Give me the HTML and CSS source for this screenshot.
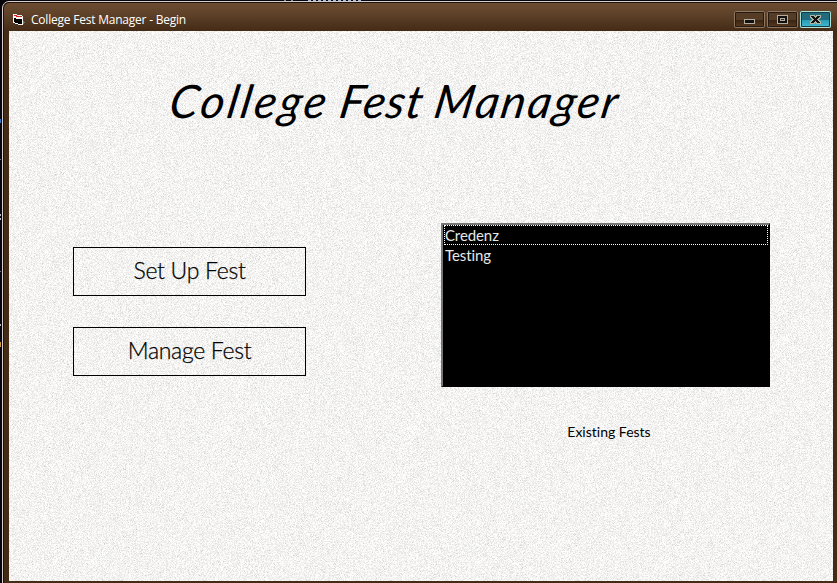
FILE: index.html
```html
<!DOCTYPE html>
<html lang="en">
<head>
<meta charset="utf-8">
<title>College Fest Manager - Begin</title>
<link rel="stylesheet" href="styles.css">
</head>
<body>
<svg class="backdrop" width="837" height="583" shape-rendering="crispEdges">
  <path d="M308 .5h55" stroke="#a8b8d0" stroke-dasharray="3 2"/>
  <path d="M284 .5h2M291 .5h2" stroke="#888"/>
  <path d="M0 119h1v4H0z" fill="#2f78cc"/>
  <path d="M0 159h1v1H0zM0 271h1v1H0z" fill="#777"/>
  <path d="M0 214h1v2H0zM0 218h1v2H0zM0 324h1v2H0z" fill="#bbb"/>
  <path d="M0 342h1v5H0z" fill="#d49a35"/>
</svg>
<div class="window">
  <header class="titlebar">
    <svg class="app-icon" width="13" height="12" viewBox="0 0 13 12" shape-rendering="crispEdges">
      <path d="M0 0h4v1h5v1h1v6h1v1h-1v2H5v-1H2V9H0z" fill="#f4f4f4"/>
      <path d="M1 1h3v1h5v1H5V3H3V2H1z" fill="#e02020"/>
      <path d="M1 4h2v1h6v5H5V9H2V8H1z" fill="#000"/>
      <path d="M10 7h1v1h1v1h-1v1h-1z" fill="#777"/>
    </svg>
    <span class="caption">College Fest Manager - Begin</span>
    <div class="controls">
      <svg class="ctl" viewBox="0 0 31 17" shape-rendering="crispEdges"><path d="M10 8h11v5H10z" fill="#b5ab9d"/><path d="M11 9h9v3h-9z" fill="#111"/></svg>
      <svg class="ctl" viewBox="0 0 31 17" shape-rendering="crispEdges"><path d="M10 4h11v9H10z" fill="#b5ab9d"/><path d="M11 5h9v7h-9z" fill="#111"/><path d="M13 7h5v3h-5z" fill="#b5ab9d"/><path d="M14 8h3v1h-3z" fill="#3c2a18"/></svg>
      <svg class="ctl close" viewBox="0 0 31 17" shape-rendering="crispEdges"><path d="M10 4h5v1h1v-1h5v3h-1v1h-1v1h1v1h1v3h-5v-1h-1v1h-5v-3h1v-1h1v-1h-1v-1h-1z" fill="#a9b5a9"/><path d="M11 5h3v1h1v1h1v-1h1v-1h3v1h-1v1h-1v1h-1v1h1v1h1v1h1v1h-3v-1h-1v-1h-1v1h-1v1h-3v-1h1v-1h1v-1h1v-1h-1v-1h-1v-1h-1z" fill="#15110e"/></svg>
    </div>
  </header>
  <main class="client">
    <svg class="paper" width="100%" height="100%">
      <filter id="grain" x="0" y="0" width="100%" height="100%" color-interpolation-filters="sRGB">
        <feTurbulence type="fractalNoise" baseFrequency="1.37" numOctaves="3" seed="4"/>
        <feColorMatrix values="0.25 0.25 0 0 0.705  0.25 0.25 0 0 0.703  0.25 0.25 0 0 0.695  0 0 0 0 1"/>
      </filter>
      <rect width="100%" height="100%" filter="url(#grain)"/>
    </svg>
    <h1 class="heading"><span><span class="college">College</span> <span class="fest">Fest</span> <span class="manager">Manager</span></span></h1>
    <div class="columns">
      <div class="actions">
        <button class="action">Set Up Fest</button>
        <button class="action">Manage Fest</button>
      </div>
      <div class="fests">
        <ul class="list">
          <li class="selected">Credenz</li>
          <li>Testing</li>
        </ul>
        <p class="label">Existing Fests</p>
      </div>
    </div>
  </main>
</div>
</body>
</html>
```
FILE: styles.css
```css
* { box-sizing: border-box; }
body { margin: 0; width: 837px; height: 583px; overflow: hidden; background: #08060a; }
.backdrop { position: absolute; left: 0; top: 0; }
.window {
  width: 845px; height: 590px; margin: 1px 0 0 2px; padding: 0 0 0 6px;
  border: 1px solid #d5ced4; border-radius: 7px 0 0 0; background: #442b16;
  box-shadow: inset 1px 1px 0 #1d130b;
}
.titlebar {
  height: 29px; margin: 0 0 0 -5px; padding: 0 0 0 9px; display: flex; align-items: center;
  background: linear-gradient(#6b4c31, #60432a 35%, #442b16);
  border-top: 1px solid #1d130b; border-radius: 6px 0 0 0;
}
.app-icon { margin-top: 6px; flex: none; }
.caption { font: 12px/16px "Open Sans", sans-serif; color: #fff; margin: 5px 0 0 5px; white-space: nowrap; letter-spacing: -0.22px; }
.controls { display: flex; gap: 2px; position: absolute; left: 734px; top: 11px; }
.ctl { width: 31px; height: 17px; border-radius: 2px; box-shadow: inset 0 0 0 1px #8d7762, inset 0 0 0 2px #26190f; background: linear-gradient(#553c27 0 50%, #38220f 50%, #5b3d24); }
.close { box-shadow: inset 0 0 0 1px #b1e1d6, inset 0 0 0 2px #123c46; background: linear-gradient(#226b7c 0 50%, #2798b2 50%, #48bfd4); }
.client { position: relative; width: 824px; height: 550px; overflow: hidden; background: #f5f4f2; color: #000; font-family: Lato, sans-serif; font-variant-ligatures: none; }
.paper { position: absolute; inset: 0; }
.heading { position: relative; margin: 41px 0 0 159px; height: 62px; font: italic 400 46px/58px Lato, sans-serif; white-space: nowrap; }
.heading > span { display: inline-block; transform: skewX(-10deg); transform-origin: 0 75%; }
.college { letter-spacing: 3px; }
.fest { letter-spacing: 1.2px; }
.manager { letter-spacing: 2.2px; }
.columns { position: relative; display: flex; margin-top: 89px; }
.actions { display: flex; flex-direction: column; gap: 31px; margin: 24px 0 0 64px; }
.action { width: 233px; height: 49px; padding: 0 0 4px; border: 1px solid #000; background: none; color: #000; font: 300 23px/30px Lato, sans-serif; letter-spacing: -0.3px; -webkit-text-stroke: 0.25px #000; }
.fests { margin-left: 135px; width: 329px; }
.list { list-style: none; margin: 0; padding: 0 1px; height: 164px; border: 1px solid #777; border-width: 2px 1px 1px 2px; border-color: #777 #000 #000 #777; background: #000; color: #e8e8e8; font: 400 15px/20px Lato, sans-serif; letter-spacing: -0.1px; }
.list li { height: 20px; padding: 0; border: 1px solid transparent; line-height: 18px; }
.list .selected { border: 1px dotted #fff; }
.label { margin: 35px 0 0; padding-left: 7px; text-align: center; font: 400 14px/20px Lato, sans-serif; font-variant-ligatures: none; }
```
